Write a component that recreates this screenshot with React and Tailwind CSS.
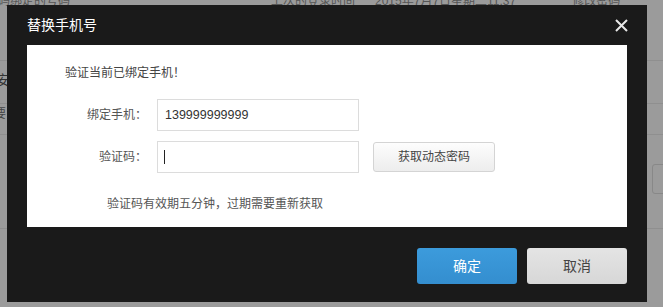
import React from "react";

const cjk = { fontFamily: '"Liberation Sans", "Noto Sans CJK SC", sans-serif' };

function BackgroundPage() {
  return (
    <div className="absolute inset-0 bg-[#9b9b9b] text-[#555] text-[12px]">
      <div className="flex items-end h-[8px] overflow-hidden leading-[14px]">
        <span className="w-[70px] shrink-0 whitespace-nowrap -ml-[14px]">号码绑定的号码</span>
        <span className="ml-[215px] whitespace-nowrap">上次的登录时间</span>
        <span className="ml-[20px] whitespace-nowrap">2015年7月7日星期二11:37</span>
        <span className="ml-[56px] whitespace-nowrap">修改密码</span>
      </div>
      <div className="border-b border-[#8f8f8f] mt-[52px]" />
      <div className="border-b border-[#8f8f8f] mt-[42px]" />
      <div className="border-b border-[#8f8f8f] mt-[30px]" />
      <div className="flex justify-end mt-[29px]">
        <div className="w-[14px] h-[30px] border border-[#888] rounded-[3px] -mr-[3px]" />
      </div>
      <div className="border-b border-[#8f8f8f] mt-[34px]" />
      <div className="absolute left-[-4px] top-[70px] text-[#333] text-[14px]">安</div>
      <div className="absolute left-[-6px] top-[105px] text-[#444]">要</div>
    </div>
  );
}

function Field({ label, children }) {
  return (
    <div className="flex items-center">
      <span className="w-[130px] text-right text-[#555] text-[12px] pr-[10px]">{label}</span>
      {children}
    </div>
  );
}

export default function App() {
  return (
    <div className="relative w-[663px] h-[307px] overflow-hidden" style={cjk}>
      <BackgroundPage />
      <div className="absolute left-[7px] top-[5px] w-[640px] h-[297px] bg-[#1a1a1a] flex flex-col px-[20px]">
        <div className="h-[40px] flex items-center justify-between">
          <span className="text-white text-[14px] pt-[1px]">替换手机号</span>
          <svg width="13" height="13" viewBox="0 0 13 13" className="mr-[-1px] mt-[1px]">
            <path d="M1 1L12 12M12 1L1 12" stroke="#e8e8e8" strokeWidth="2" />
          </svg>
        </div>
        <div className="bg-white h-[182px] flex flex-col">
          <div className="pl-[38px] pt-[19px] text-[12px] text-[#444]">验证当前已绑定手机！</div>
          <div className="flex flex-col gap-[10px] mt-[17px]">
            <Field label="绑定手机：">
              <div className="w-[202px] h-[32px] border border-[#dcdcdc] flex items-center px-[7px] text-[12.5px] text-[#333]">
                139999999999
              </div>
            </Field>
            <Field label="验证码：">
              <div className="w-[202px] h-[32px] border border-[#dcdcdc] flex items-center px-[6px]">
                <div className="w-px h-[14px] bg-[#222]" />
              </div>
              <button className="ml-[14px] w-[122px] h-[30px] border border-[#d4d4d4] rounded-[3px] bg-gradient-to-b from-[#fdfdfd] to-[#ededed] text-[12px] text-[#444]">
                获取动态密码
              </button>
            </Field>
          </div>
          <div className="pl-[80px] mt-[22px] text-[12px] text-[#555]">验证码有效期五分钟，过期需要重新获取</div>
        </div>
        <div className="flex justify-end gap-[10px] mt-[21px]">
          <button className="w-[100px] h-[36px] rounded-[3px] bg-gradient-to-b from-[#3c9bdc] to-[#348ecf] text-white text-[14px]">
            确定
          </button>
          <button className="w-[100px] h-[36px] rounded-[3px] bg-gradient-to-b from-[#e4e4e4] to-[#d7d7d7] text-[#444] text-[14px]">
            取消
          </button>
        </div>
      </div>
    </div>
  );
}
